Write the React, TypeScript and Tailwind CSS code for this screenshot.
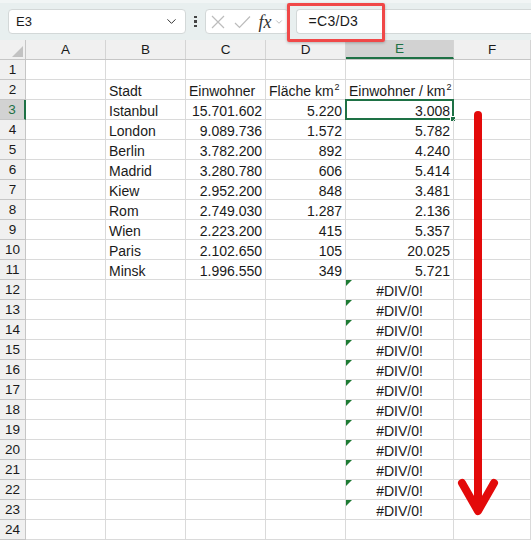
import { ChevronDown } from 'lucide-react';

const cols = [
    { key: 'A', w: 'w-[80px]' },
    { key: 'B', w: 'w-[80px]' },
    { key: 'C', w: 'w-[80px]' },
    { key: 'D', w: 'w-[80px]' },
    { key: 'E', w: 'w-[108px]' },
    { key: 'F', w: 'flex-1' },
];

type Cell = { text?: React.ReactNode; align?: 'left' | 'right' | 'center'; err?: boolean };

const data: [string, string, string, string][] = [
    ['Istanbul', '15.701.602', '5.220', '3.008'],
    ['London', '9.089.736', '1.572', '5.782'],
    ['Berlin', '3.782.200', '892', '4.240'],
    ['Madrid', '3.280.780', '606', '5.414'],
    ['Kiew', '2.952.200', '848', '3.481'],
    ['Rom', '2.749.030', '1.287', '2.136'],
    ['Wien', '2.223.200', '415', '5.357'],
    ['Paris', '2.102.650', '105', '20.025'],
    ['Minsk', '1.996.550', '349', '5.721'],
];

const Sq = () => <span className="text-[9px] relative -top-[6px] ml-[1px]">2</span>;

// builds the cell content of a given row (1-based)
const rowCells = (r: number): Cell[] => {
    if (r === 2) {
        return [
            {},
            { text: 'Stadt', align: 'left' },
            { text: 'Einwohner', align: 'left' },
            { text: <>Fläche km<Sq /></>, align: 'left' },
            { text: <>Einwohner / km<Sq /></>, align: 'left' },
            {},
        ];
    }
    if (r >= 3 && r <= 11) {
        const [city, pop, area, dens] = data[r - 3];
        return [
            {},
            { text: city, align: 'left' },
            { text: pop, align: 'right' },
            { text: area, align: 'right' },
            { text: dens, align: 'right' },
            {},
        ];
    }
    if (r >= 12 && r <= 23) {
        return [{}, {}, {}, {}, { text: '#DIV/0!', align: 'center', err: true }, {}];
    }
    return [{}, {}, {}, {}, {}, {}];
};

const rows = Array.from({ length: 24 }, (_, i) => i + 1);

const App = () => {
    return (
        <div className="w-[531px] h-[541px] overflow-hidden bg-white relative font-['Liberation_Sans',Arial,sans-serif] text-[14px] text-[#1a1a1a]">
            {/* formula bar */}
            <div className="h-[40px] bg-[#e8efef] border-t-[3px] border-[#f1f5f5] flex items-center pl-[8px] gap-[6px]">
                <div className="w-[178px] h-[25px] bg-white border border-[#d3d8d8] rounded-[4px] flex items-center justify-between pl-[7px] pr-[6px]">
                    <span className="text-[13px]">E3</span>
                    <ChevronDown size={15} strokeWidth={1.6} className="text-[#333]" />
                </div>
                <div className="flex flex-col gap-[2px] px-[2px]">
                    <span className="w-[2.5px] h-[2.5px] bg-[#444]" />
                    <span className="w-[2.5px] h-[2.5px] bg-[#444]" />
                    <span className="w-[2.5px] h-[2.5px] bg-[#444]" />
                </div>
                <div className="w-[84px] h-[25px] bg-white border border-[#d3d8d8] rounded-[4px] flex items-center pl-[5px]">
                    <svg width="14" height="14" viewBox="0 0 14 14" className="text-[#bcbcbc]">
                        <path d="M1 1L13 13M13 1L1 13" stroke="currentColor" strokeWidth="1.2" fill="none" />
                    </svg>
                    <svg width="17" height="14" viewBox="0 0 17 14" className="text-[#bcbcbc] ml-[9px]">
                        <path d="M1 8L5.5 12.5L16 1.5" stroke="currentColor" strokeWidth="1.2" fill="none" />
                    </svg>
                    <span className="font-['Liberation_Serif',serif] italic text-[18px] text-[#333] ml-[8px] leading-none">fx</span>
                    <ChevronDown size={10} strokeWidth={1.5} className="text-[#999] ml-[2px]" />
                </div>
                <div className="flex-1 h-[25px] bg-white border border-[#d3d8d8] rounded-l-[4px] border-r-0 flex items-center pl-[12px] ml-[1px]">
                    <span className="text-[14px] tracking-[0.3px]">=C3/D3</span>
                </div>
            </div>

            {/* column headers */}
            <div className="flex h-[20px] bg-[#f0f0f0] border-b border-[#c6c6c6]">
                <div className="w-[26px] border-r border-[#c6c6c6] relative">
                    <div className="absolute right-[2px] bottom-[2px] w-0 h-0 border-l-[11px] border-l-transparent border-b-[11px] border-b-[#c2c2c2]" />
                </div>
                {cols.map((c) => (
                    <div
                        key={c.key}
                        className={`${c.w} flex items-center justify-center border-r border-[#d4d4d4] text-[13.5px] pt-[1px] ${c.key === 'E' ? 'bg-[#d2d2d2] border-b-2 border-b-[#1e7145] text-[#1e7145]' : ''}`}
                    >
                        {c.key}
                    </div>
                ))}
            </div>

            {/* grid */}
            {rows.map((r) => (
                <div key={r} className="flex h-[20px]">
                    <div
                        className={`w-[26px] flex items-center justify-center border-r border-b border-[#c6c6c6] text-[13.5px] pt-[2px] ${r === 3 ? 'bg-[#d2d2d2] border-r-2 border-r-[#1e7145] text-[#1e7145]' : 'bg-[#f0f0f0]'}`}
                    >
                        {r}
                    </div>
                    {rowCells(r).map((cell, i) => {
                        const col = cols[i];
                        const selected = r === 3 && col.key === 'E';
                        return (
                            <div
                                key={col.key}
                                className={`${col.w} relative flex items-center border-r border-b border-[#dadada] px-[3px] pt-[3px] whitespace-nowrap overflow-visible ${cell.align === 'right' ? 'justify-end' : cell.align === 'center' ? 'justify-center' : 'justify-start'}`}
                            >
                                {cell.err && (
                                    <div className="absolute left-0 top-0 w-0 h-0 border-t-[6px] border-t-[#1e7b34] border-r-[6px] border-r-transparent" />
                                )}
                                {selected && (
                                    <>
                                        <div className="absolute -left-[1px] -top-[1px] right-[-1px] bottom-[-1px] border-2 border-[#1e7145]" />
                                        <div className="absolute -right-[3px] -bottom-[3px] w-[6px] h-[6px] bg-[#1e7145] border border-white" />
                                    </>
                                )}
                                <span className="relative leading-none">{cell.text}</span>
                            </div>
                        );
                    })}
                </div>
            ))}

            {/* red highlight round the formula */}
            <div className="absolute left-[287px] top-[3px] w-[98px] h-[39px] border-[3px] border-[#f04848] rounded-[2px] shadow-[0_1px_3px_rgba(0,0,0,0.25)]" />

            {/* red arrow */}
            <svg className="absolute left-[455px] top-[105px]" width="50" height="415" viewBox="0 0 50 415">
                <line x1="23" y1="10" x2="23" y2="400" stroke="#e30a0a" strokeWidth="8" strokeLinecap="round" />
                <polyline points="7,378 23,406 39,378" fill="none" stroke="#e30a0a" strokeWidth="8" strokeLinecap="round" strokeLinejoin="round" />
            </svg>
        </div>
    );
};

export default App;
